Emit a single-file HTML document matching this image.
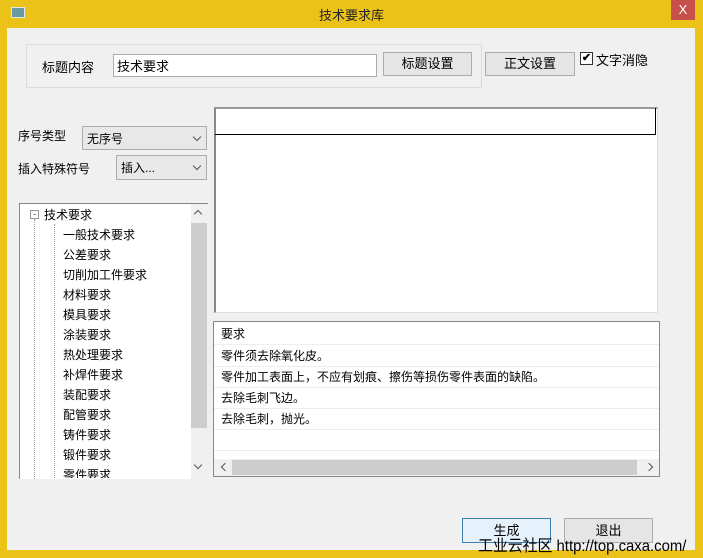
<!DOCTYPE html>
<html><head><meta charset="utf-8"><style>
*{margin:0;padding:0;box-sizing:border-box}
body{width:703px;height:558px;background:#ebc318;position:relative;overflow:hidden;font-family:"Liberation Sans","Microsoft YaHei","Noto Sans CJK SC",sans-serif;font-size:12px;color:#000}
.a{position:absolute}
.btn{position:absolute;background:#e5e5e5;border:1px solid #acacac;text-align:center;font-size:13px}
.combo{position:absolute;background:#e8e8e8;border:1px solid #acacac;font-size:12px;padding-left:4px}
.combo::after{content:"";position:absolute;right:6px;top:7px;width:5px;height:5px;border-right:1.5px solid #555;border-bottom:1.5px solid #555;transform:rotate(45deg)}
.ti{position:absolute;left:63px;font-size:12px}
.row{position:absolute;left:0;right:0;height:21px;border-bottom:1px solid #eeeeee;padding-left:7px;line-height:20px;font-size:12px}
</style></head><body>
<div class="a" style="left:11px;top:7px;width:14px;height:11px;background:#6a9aa6;border:1px solid #dfe8e8"></div>
<div class="a" style="left:0;right:0;top:5px;text-align:center;font-size:13px;color:#222">技术要求库</div>
<div class="a" style="left:671px;top:0;width:24px;height:20px;background:#c7504a;color:#fff;text-align:center;font-size:13px;line-height:19px">X</div>
<div class="a" style="left:7px;top:28px;width:688px;height:522px;background:#f0f0f0"></div>
<div class="a" style="left:26px;top:44px;width:456px;height:44px;border:1px solid #dcdcdc"></div>
<div class="a" style="left:42px;top:57px;font-size:13px">标题内容</div>
<div class="a" style="left:113px;top:54px;width:264px;height:23px;background:#fff;border:1px solid #abadb3;padding:1px 3px;font-size:13px">技术要求</div>
<div class="btn" style="left:383px;top:52px;width:89px;height:24px;line-height:22px">标题设置</div>
<div class="btn" style="left:485px;top:52px;width:90px;height:24px;line-height:22px">正文设置</div>
<div class="a" style="left:580px;top:52px;width:13px;height:13px;background:#fff;border:1px solid #333;font-size:11px;line-height:11px;text-align:center;font-weight:bold">✔</div>
<div class="a" style="left:596px;top:50px;font-size:13px">文字消隐</div>
<div class="a" style="left:18px;top:127px;font-size:12px">序号类型</div>
<div class="combo" style="left:82px;top:126px;width:125px;height:24px;line-height:24px">无序号</div>
<div class="a" style="left:18px;top:160px;font-size:12px">插入特殊符号</div>
<div class="combo" style="left:116px;top:155px;width:91px;height:25px;line-height:24px">插入...</div>
<div class="a" style="left:214px;top:107px;width:444px;height:206px;background:#fff;border-left:2px solid #888;border-top:2px solid #999;border-right:1px solid #ddd;border-bottom:1px solid #ddd"></div>
<div class="a" style="left:215px;top:108px;width:441px;height:27px;border:1px solid #000;border-top:none;border-left:none"></div>
<div class="a" style="left:19px;top:203px;width:189px;height:276px;background:#fff;border-left:1px solid #828790;border-top:1px solid #828790;overflow:hidden">
 <div class="a" style="left:171px;top:0;width:17px;height:276px;background:#f0f0f0"></div>
 <div class="a" style="left:171px;top:19px;width:16px;height:205px;background:#cdcdcd"></div>
 <div class="a" style="left:175px;top:7px;width:6px;height:6px;border-left:1.5px solid #555;border-top:1.5px solid #555;transform:rotate(45deg)"></div>
 <div class="a" style="left:175px;top:258px;width:6px;height:6px;border-right:1.5px solid #555;border-bottom:1.5px solid #555;transform:rotate(45deg)"></div>
 <div class="a" style="left:10px;top:6px;width:9px;height:9px;border:1px solid #999;font-size:9px;line-height:6px;text-align:center;color:#333">-</div>
 <div class="a" style="left:14px;top:15px;height:270px;border-left:1px dotted #999"></div>
 <div class="a" style="left:34px;top:20px;height:270px;border-left:1px dotted #999"></div>
</div>
<div class="a" style="left:44px;top:206px;font-size:12px">技术要求</div>
<div class="ti" style="top:226px">一般技术要求</div>
<div class="ti" style="top:246px">公差要求</div>
<div class="ti" style="top:266px">切削加工件要求</div>
<div class="ti" style="top:286px">材料要求</div>
<div class="ti" style="top:306px">模具要求</div>
<div class="ti" style="top:326px">涂装要求</div>
<div class="ti" style="top:346px">热处理要求</div>
<div class="ti" style="top:366px">补焊件要求</div>
<div class="ti" style="top:386px">装配要求</div>
<div class="ti" style="top:406px">配管要求</div>
<div class="ti" style="top:426px">铸件要求</div>
<div class="ti" style="top:446px">锻件要求</div>
<div class="a" style="left:63px;top:466px;height:12px;overflow:hidden;font-size:12px">零件要求</div>
<div class="a" style="left:213px;top:321px;width:447px;height:156px;background:#fff;border:1px solid #828790;overflow:hidden">
 <div class="row" style="top:2px">要求</div>
 <div class="row" style="top:24px">零件须去除氧化皮。</div>
 <div class="row" style="top:45px">零件加工表面上，不应有划痕、擦伤等损伤零件表面的缺陷。</div>
 <div class="row" style="top:66px">去除毛刺飞边。</div>
 <div class="row" style="top:87px">去除毛刺，抛光。</div>
 <div class="row" style="top:108px"></div>
 <div class="a" style="left:0;right:0;top:137px;height:17px;background:#f0f0f0"></div>
 <div class="a" style="left:18px;top:138px;width:405px;height:15px;background:#cdcdcd"></div>
 <div class="a" style="left:8px;top:142px;width:6px;height:6px;border-left:1.5px solid #555;border-bottom:1.5px solid #555;transform:rotate(45deg)"></div>
 <div class="a" style="left:432px;top:142px;width:6px;height:6px;border-right:1.5px solid #555;border-top:1.5px solid #555;transform:rotate(45deg)"></div>
</div>
<div class="btn" style="left:462px;top:518px;width:89px;height:25px;line-height:24px;border-color:#3c7fb1;background:#e5f1fb">生成</div>
<div class="btn" style="left:564px;top:518px;width:89px;height:25px;line-height:24px">退出</div>
<div class="a" style="left:478px;top:532px;font-size:16px;white-space:nowrap;color:#000;transform:scaleX(0.93);transform-origin:0 0">工业云社区 http://top.caxa.com/</div>
</body></html>
